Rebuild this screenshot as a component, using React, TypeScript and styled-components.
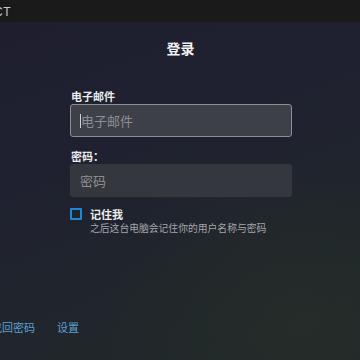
import React from "react";
import styled, { createGlobalStyle } from "styled-components";

const Global = createGlobalStyle`
  html, body { margin: 0; padding: 0; width: 360px; height: 360px; overflow: hidden; background: #1c1e28; }
  * { box-sizing: border-box; }
  body { font-family: "Noto Sans CJK SC", "Noto Sans", sans-serif; }
`;

const Page = styled.div`
  width: 360px;
  height: 360px;
  display: flex;
  flex-direction: column;
  overflow: hidden;
`;

const TopBar = styled.div`
  height: 22px;
  background: #1a1a1b;
  display: flex;
  align-items: center;
  overflow: hidden;
`;

const BarTitle = styled.span`
  font-family: "Liberation Sans", "DejaVu Sans", sans-serif;
  font-size: 12px;
  letter-spacing: 0.5px;
  color: #c9c9c9;
  margin-left: -6px;
  margin-top: 1px;
`;

const Body = styled.div`
  flex: 1;
  background:
    radial-gradient(ellipse 200px 160px at 300px 300px, rgba(40, 48, 40, 0.55), transparent),
    linear-gradient(160deg, #1e1e2f 0%, #1f2130 35%, #20262b 70%, #21282a 100%);
  display: flex;
  flex-direction: column;
`;

const Title = styled.h1`
  margin: 16px 0 0 0;
  text-align: center;
  font-size: 14px;
  line-height: 20px;
  font-weight: 700;
  color: #f2f2f2;
  padding-left: 1px;
`;

const Form = styled.div`
  margin: 0 0 0 70px;
  width: 222px;
  display: flex;
  flex-direction: column;
`;

const Label = styled.div<{ $top: number }>`
  margin-top: ${(p) => p.$top}px;
  padding-left: 1px;
  font-size: 11px;
  line-height: 14px;
  font-weight: 700;
  color: #ececec;
`;

const Input = styled.div<{ $focused?: boolean }>`
  margin-top: 1px;
  height: 33px;
  border-radius: 3px;
  background: ${(p) => (p.$focused ? "#3d4048" : "#34373e")};
  border: 1px solid ${(p) => (p.$focused ? "#8c8f96" : "transparent")};
  display: flex;
  align-items: center;
  padding-left: 9px;
  font-size: 13px;
  color: #8d8f94;
`;

const Caret = styled.span`
  display: inline-block;
  width: 1px;
  height: 14px;
  background: #d0d0d0;
`;

const RememberRow = styled.div`
  margin-top: 10px;
  display: flex;
  gap: 8px;
`;

const CheckBox = styled.div`
  width: 12px;
  height: 12px;
  border: 2px solid #1b8ad3;
  border-radius: 1px;
  margin-top: 1px;
  flex: none;
`;

const RememberText = styled.div`
  display: flex;
  flex-direction: column;
`;

const RememberTitle = styled.div`
  font-size: 11px;
  line-height: 14px;
  font-weight: 700;
  color: #ececec;
`;

const RememberHint = styled.div`
  font-size: 9.8px;
  line-height: 14px;
  color: #a4a6aa;
  white-space: nowrap;
`;

const Footer = styled.div`
  margin-top: auto;
  margin-bottom: 26px;
  display: flex;
  gap: 22px;
  margin-left: -9px;
`;

const Link = styled.a`
  font-size: 11px;
  line-height: 14px;
  color: #5d9fd6;
  text-decoration: none;
`;

export default function App() {
  return (
    <Page>
      <Global />
      <TopBar>
        <BarTitle>CT</BarTitle>
      </TopBar>
      <Body>
        <Title>登录</Title>
        <Form>
          <Label $top={31}>电子邮件</Label>
          <Input $focused>
            <Caret />
            电子邮件
          </Input>
          <Label $top={12}>密码：</Label>
          <Input>密码</Input>
          <RememberRow>
            <CheckBox />
            <RememberText>
              <RememberTitle>记住我</RememberTitle>
              <RememberHint>之后这台电脑会记住你的用户名称与密码</RememberHint>
            </RememberText>
          </RememberRow>
        </Form>
        <Footer>
          <Link>找回密码</Link>
          <Link>设置</Link>
        </Footer>
      </Body>
    </Page>
  );
}
